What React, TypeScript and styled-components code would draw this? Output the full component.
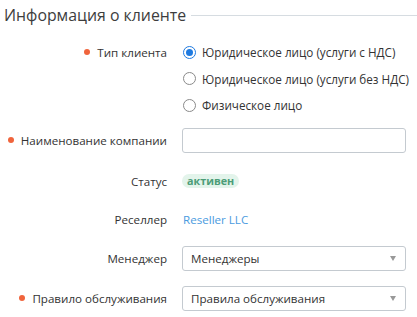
import React from "react";
import styled, { createGlobalStyle } from "styled-components";

const Global = createGlobalStyle`
  body {
    margin: 0;
    background: #fff;
    font-family: "Open Sans", "Noto Sans", sans-serif;
    color: #333;
  }
`;

const Wrap = styled.div`
  width: 417px;
  padding-top: 3px;
`;

const Legend = styled.div`
  display: flex;
  align-items: center;
  height: 24px;
  padding-left: 4px;
`;

const LegendTitle = styled.span`
  font-size: 15.85px;
  color: #3d3d3d;
  white-space: nowrap;
`;

const LegendLine = styled.div`
  flex: 1;
  height: 1px;
  margin-left: 5px;
  background: #d6dce1;
`;

const Row = styled.div<{ $top: number }>`
  display: flex;
  align-items: flex-start;
  margin-top: ${(p) => p.$top}px;
`;

const Label = styled.div<{ $h?: number }>`
  width: 167px;
  flex-shrink: 0;
  display: flex;
  align-items: center;
  justify-content: flex-end;
  height: ${(p) => p.$h ?? 25}px;
  font-size: 11.6px;
  color: #333;
  white-space: nowrap;
`;

const Required = styled.span`
  width: 6px;
  height: 6px;
  border-radius: 50%;
  background: #f0643c;
  margin-right: 7px;
`;

const Control = styled.div`
  margin-left: 15px;
  width: 224px;
  min-height: 25px;
  display: flex;
  align-items: center;
`;

const RadioList = styled.div`
  display: flex;
  flex-direction: column;
  margin-left: 15px;
`;

const RadioOption = styled.label`
  display: flex;
  align-items: center;
  height: 26.5px;
  font-size: 11.7px;
  color: #333;
  white-space: nowrap;
`;

const RadioMark = styled.span<{ $on?: boolean }>`
  box-sizing: border-box;
  width: 13px;
  height: 13px;
  border-radius: 50%;
  margin-left: 1px;
  margin-right: 6px;
  border: 1px solid ${(p) => (p.$on ? "#1f7ae0" : "#8a8a8a")};
  display: flex;
  align-items: center;
  justify-content: center;
  &::after {
    content: "";
    width: 7px;
    height: 7px;
    border-radius: 50%;
    background: ${(p) => (p.$on ? "#1f7ae0" : "transparent")};
  }
`;

const TextInput = styled.div`
  box-sizing: border-box;
  width: 224px;
  height: 25px;
  border: 1px solid #c4cad0;
  border-radius: 3px;
  background: #fff;
`;

const Badge = styled.span`
  display: inline-block;
  font-size: 10.8px;
  font-weight: 700;
  line-height: 14px;
  padding: 0 5px;
  border-radius: 8px;
  background: #e3f4eb;
  color: #4c9d78;
`;

const Link = styled.a`
  font-size: 11.6px;
  color: #4a9be0;
  text-decoration: none;
  margin-left: 1px;
`;

const Select = styled.div`
  box-sizing: border-box;
  width: 224px;
  height: 25px;
  border: 1px solid #c4cad0;
  border-radius: 3px;
  display: flex;
  align-items: center;
  justify-content: space-between;
  padding: 0 9px 0 8px;
  font-size: 11.6px;
  color: #333;
`;

const Caret = styled.span`
  width: 0;
  height: 0;
  border-left: 3.5px solid transparent;
  border-right: 3.5px solid transparent;
  border-top: 5px solid #999;
`;

export default function App() {
  return (
    <Wrap>
      <Global />
      <Legend>
        <LegendTitle>Информация о клиенте</LegendTitle>
        <LegendLine />
      </Legend>

      <Row $top={12}>
        <Label $h={26.5}>
          <Required />
          Тип клиента
        </Label>
        <RadioList>
          <RadioOption>
            <RadioMark $on />
            Юридическое лицо (услуги с НДС)
          </RadioOption>
          <RadioOption>
            <RadioMark />
            Юридическое лицо (услуги без НДС)
          </RadioOption>
          <RadioOption>
            <RadioMark />
            Физическое лицо
          </RadioOption>
        </RadioList>
      </Row>

      <Row $top={9}>
        <Label>
          <Required />
          Наименование компании
        </Label>
        <Control>
          <TextInput />
        </Control>
      </Row>

      <Row $top={16}>
        <Label>Статус</Label>
        <Control>
          <Badge>активен</Badge>
        </Control>
      </Row>

      <Row $top={13}>
        <Label>Реселлер</Label>
        <Control>
          <Link href="#">Reseller LLC</Link>
        </Control>
      </Row>

      <Row $top={14}>
        <Label>Менеджер</Label>
        <Control>
          <Select>
            Менеджеры
            <Caret />
          </Select>
        </Control>
      </Row>

      <Row $top={15}>
        <Label>
          <Required />
          Правило обслуживания
        </Label>
        <Control>
          <Select>
            Правила обслуживания
            <Caret />
          </Select>
        </Control>
      </Row>
    </Wrap>
  );
}
